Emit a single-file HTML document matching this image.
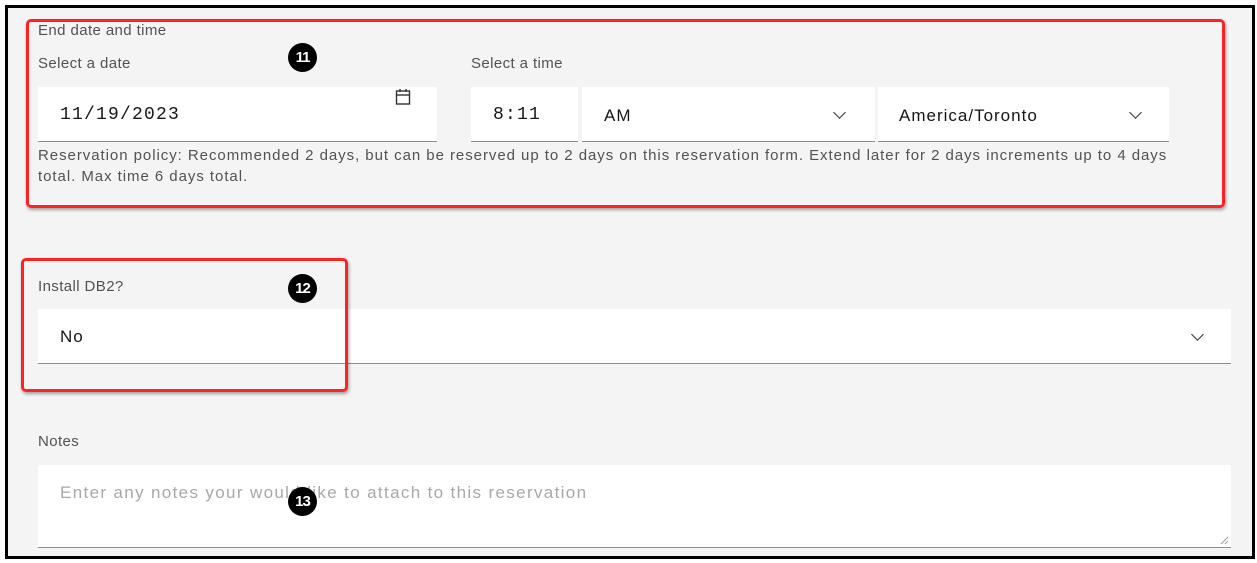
<!DOCTYPE html>
<html><head><style>
body{margin:0;width:1257px;height:563px;background:#fff;position:relative;overflow:hidden;font-family:"Liberation Sans",sans-serif;}
.frame{position:absolute;left:5px;top:5px;width:1244px;height:548px;border:3px solid #000;background:#f4f4f4;}
.a{position:absolute;}
.lbl{position:absolute;font-size:15px;letter-spacing:0.4px;color:#525252;}
.box{position:absolute;background:#fff;border-bottom:1px solid #8d8d8d;}
.val{position:absolute;font-size:17px;letter-spacing:1px;color:#161616;}
.red{position:absolute;border:3px solid #f22;border-radius:5px;box-shadow:1px 2px 3px rgba(0,0,0,.35);}
.badge{position:absolute;width:29px;height:29px;border-radius:50%;background:#000;color:#fff;font-weight:bold;font-size:15px;text-align:center;line-height:29px;letter-spacing:-1px;}
.chev{position:absolute;width:8px;height:8px;border-right:1.5px solid #333;border-bottom:1.5px solid #333;transform:rotate(45deg);}
</style></head><body>
<div class="frame"></div>
<div class="lbl" style="left:38px;top:22px">End date and time</div>
<div class="lbl" style="left:38px;top:55px">Select a date</div>
<div class="lbl" style="left:471px;top:55px">Select a time</div>
<div class="box" style="left:38px;top:87px;width:399px;height:54px"></div>
<div class="val" style="left:60px;top:105px;font-family:'Liberation Mono',monospace;font-size:18px;letter-spacing:1.2px">11/19/2023</div>
<svg class="a" style="left:395px;top:88px" width="16" height="18" viewBox="0 0 16 18"><rect x="1.5" y="3" width="13" height="13" fill="none" stroke="#333" stroke-width="1.4"/><line x1="1.5" y1="7" x2="14.5" y2="7" stroke="#333" stroke-width="1.4"/><line x1="5" y1="1" x2="5" y2="4" stroke="#333" stroke-width="1.4"/><line x1="11" y1="1" x2="11" y2="4" stroke="#333" stroke-width="1.4"/></svg>
<div class="box" style="left:471px;top:87px;width:107px;height:54px"></div>
<div class="val" style="left:493px;top:105px;font-family:'Liberation Mono',monospace;font-size:18px;letter-spacing:1.2px">8:11</div>
<div class="box" style="left:582px;top:87px;width:293px;height:54px"></div>
<div class="val" style="left:604px;top:106px;">AM</div>
<div class="chev" style="left:835px;top:108px"></div>
<div class="box" style="left:878px;top:87px;width:291px;height:54px"></div>
<div class="val" style="left:899px;top:106px;">America/Toronto</div>
<div class="chev" style="left:1131px;top:108px"></div>
<div class="lbl" style="left:38px;top:145px;font-size:15px;letter-spacing:0.95px;line-height:21px;width:1168px">Reservation policy: Recommended 2 days, but can be reserved up to 2 days on this reservation form. Extend later for 2 days increments up to 4 days<br>total. Max time 6 days total.</div>
<div class="lbl" style="left:38px;top:278px">Install DB2?</div>
<div class="box" style="left:38px;top:309px;width:1193px;height:54px"></div>
<div class="val" style="left:60px;top:327px;">No</div>
<div class="chev" style="left:1193px;top:330px"></div>
<div class="lbl" style="left:38px;top:433px">Notes</div>
<div class="box" style="left:38px;top:465px;width:1193px;height:82px"></div>
<div class="val" style="left:60px;top:483px;color:#a8a8a8;letter-spacing:1.35px">Enter any notes your would like to attach to this reservation</div>
<svg class="a" style="left:1219px;top:535px" width="10" height="10"><line x1="2" y1="9" x2="9" y2="2" stroke="#999"/><line x1="6" y1="9" x2="9" y2="6" stroke="#999"/></svg>
<div class="red" style="left:26px;top:19px;width:1193px;height:183px"></div>
<div class="red" style="left:21px;top:258px;width:321px;height:128px"></div>
<div class="badge" style="left:288px;top:43px">11</div>
<div class="badge" style="left:288px;top:274px">12</div>
<div class="badge" style="left:288px;top:487px">13</div>
</body></html>
